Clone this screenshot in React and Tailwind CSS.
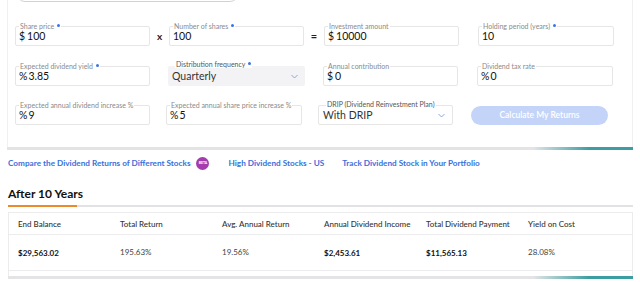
import React from 'react';

const Dot = () => <span className="inline-block w-[3px] h-[3px] rounded-full bg-[#3b74e6] ml-[3px] -translate-y-[2px]" />;

function Field({ label, value, dot, width, className = '' }) {
  return (
    <div className={`relative h-[20px] border border-[#e6e6e6] rounded-[2px] bg-white flex items-center px-[3px] ${className}`} style={{ width }}>
      <span className="absolute -top-[5px] left-[3px] bg-white px-[1px] text-[7px] leading-[8px] text-[#8a8a8a] whitespace-nowrap">
        {label}{dot && <Dot />}
      </span>
      <span className="text-[10.5px] text-[#111] mt-[1px]">{value}</span>
    </div>
  );
}

function Chevron() {
  return (
    <svg width="7" height="5" viewBox="0 0 7 5" className="shrink-0">
      <polyline points="0.5,1 3.5,4 6.5,1" fill="none" stroke="#7f9ed8" strokeWidth="0.9" />
    </svg>
  );
}

function Select({ label, value, dot, width, gray }) {
  return (
    <div
      className={`relative h-[20px] rounded-[2px] flex items-center justify-between pl-[4px] pr-[7px] ${gray ? 'bg-[#f3f3f5]' : 'bg-white border border-[#e6e6e6]'}`}
      style={{ width }}
    >
      <span className="absolute -top-[6px] left-[7px] bg-white px-[1px] text-[7px] leading-[8px] text-[#555] whitespace-nowrap">
        {label}{dot && <Dot />}
      </span>
      <span className="text-[10.5px] text-[#333] mt-[2px]">{value}</span>
      <Chevron />
    </div>
  );
}

const Bar = () => (
  <div className="h-[3px] bg-[linear-gradient(to_right,#e4e4e6_84%,#3d9ea1_93%)]" />
);

export default function App() {
  const money = (v) => <><span>$</span><span className="ml-[2px]">{v}</span></>;
  const pct = (v) => <><span>%</span><span className="ml-[1px]">{v}</span></>;

  const results = [
    ['End Balance', '$29,563.02', true],
    ['Total Return', '195.63%', false],
    ['Avg. Annual Return', '19.56%', false],
    ['Annual Dividend Income', '$2,453.61', true],
    ['Total Dividend Payment', '$11,565.13', true],
    ['Yield on Cost', '28.08%', false],
  ];

  return (
    <div className="w-[640px] h-[282px] overflow-hidden bg-white font-['Lato','Liberation_Sans',sans-serif]">
      {/* form card */}
      <div className="ml-[7px] w-[626px]">
        <div className="border-x border-[#f0f0f2] bg-white pb-[22px]">
          <div className="ml-[8px] w-[223px] h-[24px] -mt-[22px] border border-[#d2d2d4] rounded-[9px]" />

          <div className="flex items-center mt-[24px] pl-[7px]">
            <Field label="Share price" dot value={money('100')} width={135} />
            <span className="w-[19px] text-center text-[10px] font-bold text-[#222]">x</span>
            <Field label="Number of shares" dot value="100" width={135} />
            <span className="w-[20px] text-center text-[11px] font-bold text-[#222]">=</span>
            <Field label="Investment amount" value={money('10000')} width={135} />
            <span className="w-[19px]" />
            <Field label="Holding period (years)" dot value="10" width={136} />
          </div>

          <div className="flex items-center mt-[20px] pl-[7px]">
            <Field label="Expected dividend yield" dot value={pct('3.85')} width={135} />
            <span className="w-[18px]" />
            <Select label="Distribution frequency" dot value="Quarterly" width={137} gray />
            <span className="w-[18px]" />
            <Field label="Annual contribution" value={money('0')} width={135} />
            <span className="w-[19px]" />
            <Field label="Dividend tax rate" value={pct('0')} width={136} />
          </div>

          <div className="flex items-center mt-[19px] pl-[7px]">
            <Field label="Expected annual dividend increase %" value={pct('9')} width={135} />
            <span className="w-[16px]" />
            <Field label="Expected annual share price increase %" value={pct('5')} width={136} />
            <span className="w-[16px]" />
            <Select label="DRIP (Dividend Reinvestment Plan)" value="With DRIP" width={135} />
            <span className="w-[18px]" />
            <button className="w-[137px] h-[19px] rounded-full bg-[#c4d4f8] text-white text-[8.5px] font-semibold">
              Calculate My Returns
            </button>
          </div>
        </div>
        <Bar />
      </div>

      {/* links */}
      <div className="flex items-center ml-[8px] mt-[6px] h-[15px] text-[8.2px] font-bold text-[#3a6fdc] whitespace-nowrap">
        <span>Compare the Dividend Returns of Different Stocks</span>
        <span className="ml-[6px] w-[13px] h-[13px] rounded-full bg-[#a43cb0] text-white text-[3.5px] font-bold flex items-center justify-center">BETA</span>
        <span className="ml-[19px]">High Dividend Stocks - US</span>
        <span className="ml-[18px]">Track Dividend Stock in Your Portfolio</span>
      </div>

      {/* results */}
      <div className="ml-[8px] w-[625px] mt-[15px]">
        <h2 className="text-[12px] font-bold text-[#111] leading-[16px]">After 10 Years</h2>
        <div className="mt-[3px] h-[2px] flex">
          <div className="w-[69px] bg-[#ea8a2a]" />
          <div className="flex-1 bg-[#e2e2e4]" />
        </div>
        <div className="mt-[5px] border-x border-t border-[#ececee] bg-white">
          <div className="grid grid-cols-6 pl-[9px] pr-[2px] h-[22px] items-center border-b border-[#ececee] text-[8px] text-[#333] font-medium">
            {results.map(([h]) => <span key={h} className="whitespace-nowrap">{h}</span>)}
          </div>
          <div className="grid grid-cols-6 pl-[9px] pr-[2px] h-[36px] items-center border-b border-[#ececee] text-[8px]">
            {results.map(([h, v, b]) => (
              <span key={h} className={b ? 'font-bold text-[#111] mt-[1px]' : 'text-[#444] -mt-[2px]'}>{v}</span>
            ))}
          </div>
          <div className="h-[5px]" />
        </div>
        <Bar />
      </div>
    </div>
  );
}
